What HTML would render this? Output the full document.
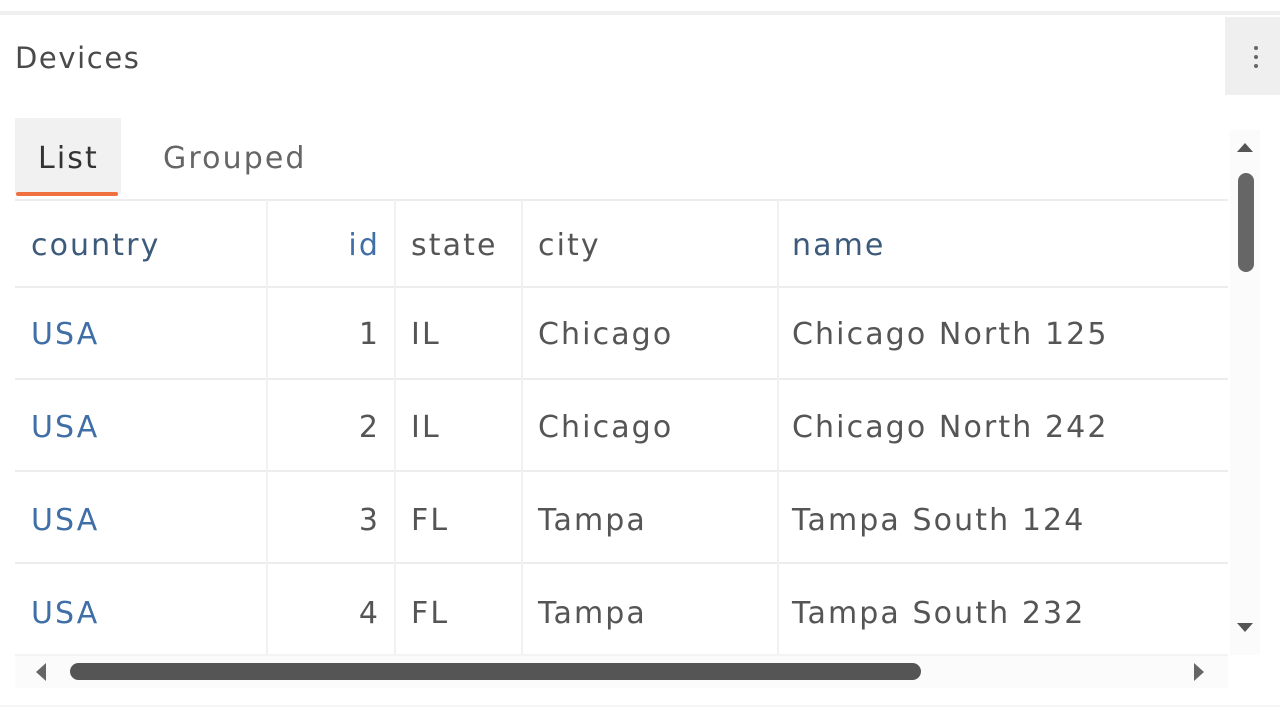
<!DOCTYPE html>
<html><head><meta charset="utf-8"><style>
*{margin:0;padding:0;box-sizing:border-box}
body{width:1280px;height:720px;background:#fff;position:relative;overflow:hidden;font-family:"DejaVu Sans",sans-serif;color:#555}
.a{position:absolute}
.t{position:absolute;font-size:30px;line-height:40px;white-space:nowrap;letter-spacing:2.1px}
.b{color:#3f6fa6}
.vl{position:absolute;top:200px;height:455px;width:2px;background:#f1f1f1}
.hl{position:absolute;left:15px;width:1213px;height:2px;background:#ededed}
</style></head><body>
<div class="a" style="left:0;top:11px;width:1280px;height:4px;background:#f0f0f0"></div>
<div class="t" style="left:15px;top:38px;font-size:29px;color:#4a4a4a;letter-spacing:1.6px">Devices</div>
<div class="a" style="left:1225px;top:17px;width:55px;height:78px;background:#efefef"></div>
<div class="a" style="left:1254px;top:46px;width:4px;height:4px;background:#666;border-radius:2px"></div>
<div class="a" style="left:1254px;top:55px;width:4px;height:4px;background:#666;border-radius:2px"></div>
<div class="a" style="left:1254px;top:64px;width:4px;height:4px;background:#666;border-radius:2px"></div>
<div class="a" style="left:15px;top:118px;width:106px;height:76px;background:#f1f1f1"></div>
<div class="t" style="left:38px;top:139px;color:#333">List</div>
<div class="t" style="left:163px;top:139px;color:#666">Grouped</div>
<div class="a" style="left:16px;top:192px;width:102px;height:4px;background:#f07040;border-radius:2px"></div>
<div class="hl" style="top:199px"></div>
<div class="hl" style="top:286px"></div>
<div class="hl" style="top:378px"></div>
<div class="hl" style="top:470px"></div>
<div class="hl" style="top:562px"></div>
<div class="hl" style="top:654px;background:#f4f4f4"></div>
<div class="vl" style="left:266px"></div>
<div class="vl" style="left:394px"></div>
<div class="vl" style="left:521px"></div>
<div class="vl" style="left:777px"></div>
<div class="t b" style="left:31px;top:226px;color:#3d5a7a">country</div>
<div class="t b" style="left:300px;top:226px;width:80px;text-align:right">id</div>
<div class="t" style="left:411px;top:226px">state</div>
<div class="t" style="left:538px;top:226px">city</div>
<div class="t" style="left:792px;top:226px;color:#3d5a7a">name</div>

<div class="t b" style="left:31px;top:315px">USA</div><div class="t" style="left:300px;top:315px;width:80px;text-align:right">1</div><div class="t" style="left:411px;top:315px">IL</div><div class="t" style="left:538px;top:315px">Chicago</div><div class="t" style="left:792px;top:315px">Chicago North 125</div>
<div class="t b" style="left:31px;top:408px">USA</div><div class="t" style="left:300px;top:408px;width:80px;text-align:right">2</div><div class="t" style="left:411px;top:408px">IL</div><div class="t" style="left:538px;top:408px">Chicago</div><div class="t" style="left:792px;top:408px">Chicago North 242</div>
<div class="t b" style="left:31px;top:501px">USA</div><div class="t" style="left:300px;top:501px;width:80px;text-align:right">3</div><div class="t" style="left:411px;top:501px">FL</div><div class="t" style="left:538px;top:501px">Tampa</div><div class="t" style="left:792px;top:501px">Tampa South 124</div>
<div class="t b" style="left:31px;top:594px">USA</div><div class="t" style="left:300px;top:594px;width:80px;text-align:right">4</div><div class="t" style="left:411px;top:594px">FL</div><div class="t" style="left:538px;top:594px">Tampa</div><div class="t" style="left:792px;top:594px">Tampa South 232</div>

<div class="a" style="left:1230px;top:130px;width:30px;height:525px;background:#fbfbfb"></div>
<svg class="a" style="left:1234px;top:138px" width="22" height="16"><path d="M3 14 L11 5 L19 14Z" fill="#555"/></svg>
<div class="a" style="left:1238px;top:173px;width:16px;height:99px;background:#666;border-radius:8px"></div>
<svg class="a" style="left:1234px;top:620px" width="22" height="16"><path d="M3 3 L11 12 L19 3Z" fill="#555"/></svg>
<div class="a" style="left:15px;top:656px;width:1213px;height:32px;background:#fbfbfb"></div>
<svg class="a" style="left:30px;top:660px" width="20" height="24"><path d="M16 3 L6 12 L16 21Z" fill="#666"/></svg>
<div class="a" style="left:70px;top:663px;width:851px;height:17px;background:#555;border-radius:9px"></div>
<svg class="a" style="left:1190px;top:660px" width="20" height="24"><path d="M4 3 L14 12 L4 21Z" fill="#666"/></svg>
<div class="a" style="left:0;top:705px;width:1280px;height:2px;background:#f6f6f6"></div>
</body></html>
